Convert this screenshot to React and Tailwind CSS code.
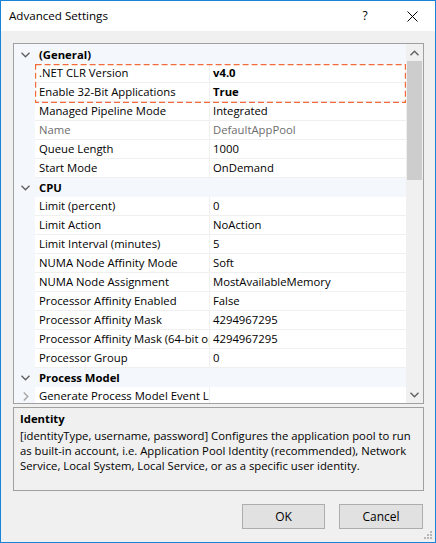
import React from "react";

const sections = [
  {
    title: "(General)",
    rows: [
      { n: ".NET CLR Version", v: "v4.0", bold: true },
      { n: "Enable 32-Bit Applications", v: "True", bold: true },
      { n: "Managed Pipeline Mode", v: "Integrated" },
      { n: "Name", v: "DefaultAppPool", disabled: true },
      { n: "Queue Length", v: "1000" },
      { n: "Start Mode", v: "OnDemand" },
    ],
  },
  {
    title: "CPU",
    rows: [
      { n: "Limit (percent)", v: "0" },
      { n: "Limit Action", v: "NoAction" },
      { n: "Limit Interval (minutes)", v: "5" },
      { n: "NUMA Node Affinity Mode", v: "Soft" },
      { n: "NUMA Node Assignment", v: "MostAvailableMemory" },
      { n: "Processor Affinity Enabled", v: "False" },
      { n: "Processor Affinity Mask", v: "4294967295" },
      { n: "Processor Affinity Mask (64-bit option)", v: "4294967295" },
      { n: "Processor Group", v: "0" },
    ],
  },
  {
    title: "Process Model",
    rows: [{ n: "Generate Process Model Event Log Entry", v: "", expander: true }],
  },
];

function ChevronDown({ color = "#606060" }) {
  return (
    <svg width="9" height="6" viewBox="0 0 9 6">
      <polyline points="0.5,0.8 4.5,4.8 8.5,0.8" fill="none" stroke={color} strokeWidth="1.4" />
    </svg>
  );
}
function ChevronUp({ color = "#606060" }) {
  return (
    <svg width="9" height="6" viewBox="0 0 9 6">
      <polyline points="0.5,5.2 4.5,1.2 8.5,5.2" fill="none" stroke={color} strokeWidth="1.4" />
    </svg>
  );
}
function ChevronRight({ color = "#a6a6a6" }) {
  return (
    <svg width="6" height="9" viewBox="0 0 6 9">
      <polyline points="0.8,0.5 4.8,4.5 0.8,8.5" fill="none" stroke={color} strokeWidth="1.4" />
    </svg>
  );
}

function CategoryRow({ title }) {
  return (
    <div className="flex h-[19px] bg-[#f4f7fc] items-center">
      <div className="w-[21px] flex justify-center items-center pl-[2px] pt-[1px]">
        <ChevronDown />
      </div>
      <div className="pl-[4px] font-bold text-black leading-none">{title}</div>
    </div>
  );
}

function PropRow({ r }) {
  const color = r.disabled ? "text-[#6d6d6d]" : "text-black";
  return (
    <div className="flex h-[19px]">
      <div className="w-[21px] shrink-0 bg-[#f4f7fc] flex justify-center items-center pl-[2px]">
        {r.expander ? <ChevronRight /> : null}
      </div>
      <div className="flex flex-1 bg-white border-b border-[#f0f0f0]">
        <div className={`w-[174px] shrink-0 pl-[4px] overflow-hidden whitespace-nowrap flex items-center ${color}`}>
          {r.n}
        </div>
        <div className="w-[1px] bg-[#f0f0f0]" />
        <div className={`flex-1 pl-[3px] overflow-hidden whitespace-nowrap flex items-center ${color} ${r.bold ? "font-bold" : ""}`}>
          {r.v}
        </div>
      </div>
    </div>
  );
}

export default function App() {
  return (
    <div className="w-[436px] h-[543px] border border-[#1883d7] flex flex-col bg-[#f0f0f0] font-['Open_Sans',sans-serif] text-[11.3px] text-black relative overflow-hidden">
      {/* Title bar */}
      <div className="h-[30px] bg-white flex items-center shrink-0">
        <div className="pl-[8px] text-[11.6px] flex-1">Advanced Settings</div>
        <div className="w-[12px] text-[12px] mr-[36px] text-center">?</div>
        <div className="mr-[17px] flex items-center">
          <svg width="11" height="11" viewBox="0 0 11 11">
            <line x1="0.5" y1="0.5" x2="10.5" y2="10.5" stroke="#000" strokeWidth="1" />
            <line x1="10.5" y1="0.5" x2="0.5" y2="10.5" stroke="#000" strokeWidth="1" />
          </svg>
        </div>
      </div>

      {/* Body */}
      <div className="flex-1 flex flex-col pl-[12px] pr-[11px] pt-[12px]">
        {/* Property grid */}
        <div className="h-[361px] border border-[#a0a0a0] flex shrink-0">
          <div className="flex-1 relative overflow-hidden bg-[#f4f7fc] pt-[1px]">
            {sections.map((s) => (
              <div key={s.title}>
                <CategoryRow title={s.title} />
                {s.rows.map((r) => (
                  <PropRow key={r.n} r={r} />
                ))}
              </div>
            ))}
            {/* selection dashed frame */}
            <svg className="absolute left-[21px] top-[20px] pointer-events-none" width="371" height="39" viewBox="0 0 371 39">
              <rect x="0.6" y="0.6" width="369.8" height="37.8" fill="none" stroke="#f26b3a" strokeWidth="1.2" strokeDasharray="6 3" />
            </svg>
          </div>
          {/* scrollbar */}
          <div className="w-[17px] bg-[#f0f0f0] flex flex-col shrink-0">
            <div className="h-[17px] flex items-center justify-center">
              <ChevronUp />
            </div>
            <div className="h-[119px] mx-[1px] bg-[#cdcdcd]" />
            <div className="flex-1" />
            <div className="h-[17px] flex items-center justify-center">
              <ChevronDown />
            </div>
          </div>
        </div>

        {/* Description */}
        <div className="mt-[3px] h-[84px] border border-[#a0a0a0] px-[6px] pt-[3px] shrink-0">
          <div className="font-bold leading-[15px]">Identity</div>
          <div className="mt-[2px] leading-[15px] whitespace-nowrap">
            <div>[identityType, username, password] Configures the application pool to run</div>
            <div>as built-in account, i.e. Application Pool Identity (recommended), Network</div>
            <div>Service, Local System, Local Service, or as a specific user identity.</div>
          </div>
        </div>

        {/* Buttons */}
        <div className="mt-[13px] flex justify-end gap-[14px] pr-[1px]">
          <button className="w-[83px] h-[25px] bg-[#e1e1e1] border border-[#adadad] text-[12px] text-black">OK</button>
          <button className="w-[84px] h-[25px] bg-[#e1e1e1] border border-[#adadad] text-[12px] text-black">Cancel</button>
        </div>
      </div>

      {/* size grip */}
      <svg className="absolute right-[2px] bottom-[2px]" width="9" height="9" viewBox="0 0 9 9">
        <rect x="6" y="0" width="2" height="2" fill="#b8b8b8" />
        <rect x="3" y="3" width="2" height="2" fill="#b8b8b8" />
        <rect x="6" y="3" width="2" height="2" fill="#b8b8b8" />
        <rect x="0" y="6" width="2" height="2" fill="#b8b8b8" />
        <rect x="3" y="6" width="2" height="2" fill="#b8b8b8" />
        <rect x="6" y="6" width="2" height="2" fill="#b8b8b8" />
      </svg>
    </div>
  );
}
